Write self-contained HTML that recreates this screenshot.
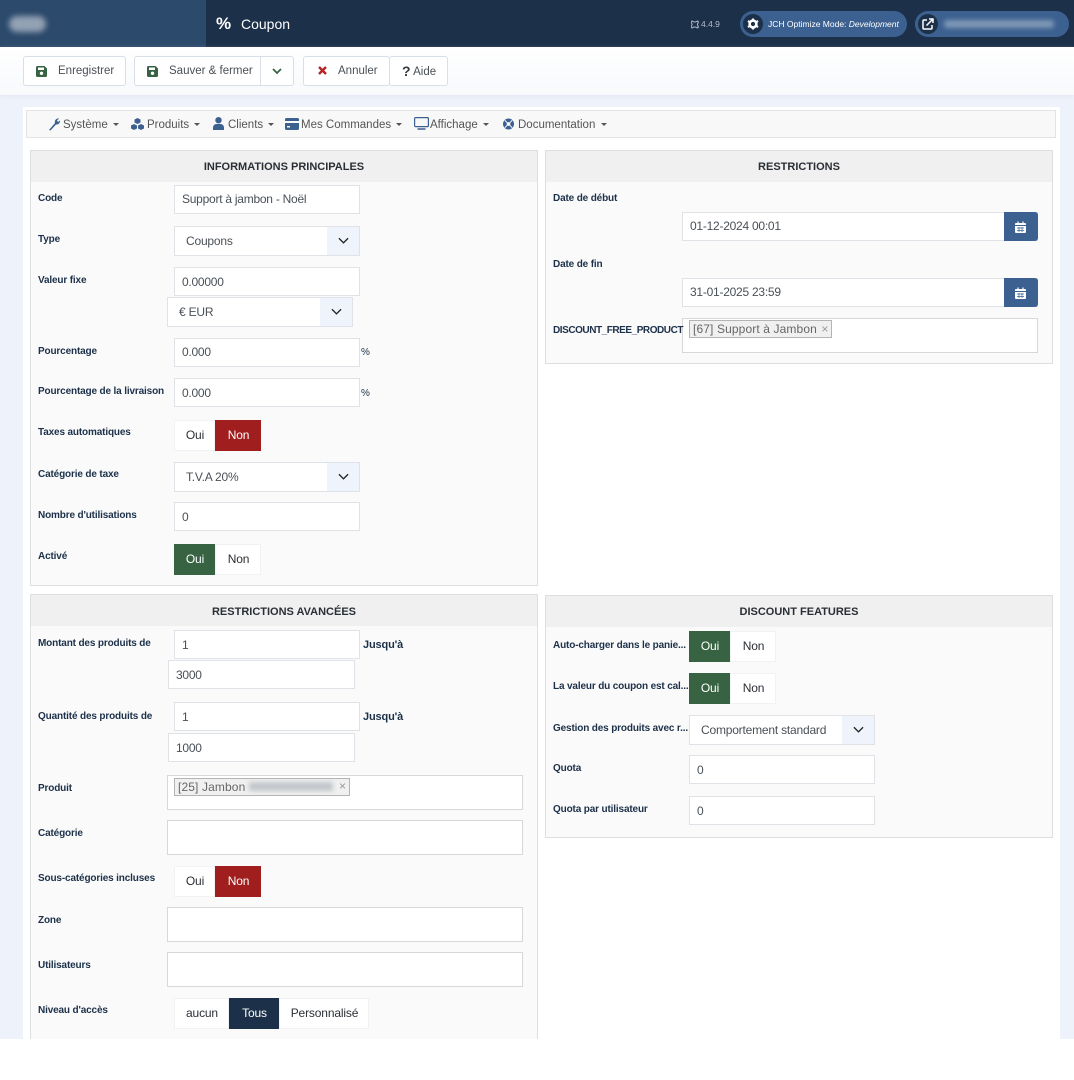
<!DOCTYPE html>
<html lang="fr"><head><meta charset="utf-8"><title>Coupon</title>
<style>
*{box-sizing:border-box}
html,body{margin:0;padding:0;background:#fff}
body{width:1074px;height:1080px;position:relative;overflow:hidden;font-family:"Liberation Sans",sans-serif;font-size:12px;color:#495057}
div,span.a,svg.a{position:absolute}
#clip{left:0;top:0;width:1074px;height:1039px;overflow:hidden;background:#eef2fa;filter:blur(.3px)}
.panel{background:#fafafa;border:1px solid #dcdfe1}
.ph{left:0;right:0;top:0;height:31px;background:#f0f0f0;text-align:center;font-weight:bold;font-size:11px;line-height:32px;color:#2a2f35}
.l{font-weight:bold;font-size:10px;line-height:14px;color:#1c3049;white-space:nowrap;margin-top:1px;letter-spacing:-.15px;z-index:2}
.i{background:#fff;border:1px solid #dfe3e7;height:29px;line-height:28px;padding-left:7px;font-size:12px;letter-spacing:-.25px;color:#495057;white-space:nowrap}
.s{background:#fff;border:1px solid #dfe3e7;height:30px;line-height:29px;font-size:12px;letter-spacing:-.2px;color:#495057;white-space:nowrap}
.s u{position:absolute;right:0;top:0;width:32px;height:28px;background:#eff3fb;text-decoration:none}
.s svg{position:absolute;left:11px;top:10px}
.t{height:31px;background:#fff;border:1px solid #f1f2f3;line-height:28px;text-align:center;font-size:12px;letter-spacing:-.15px;color:#2b3036;white-space:nowrap;padding-left:1px}
.g{background:#386342;color:#fff;border-color:#386342}
.r{background:#a01e1e;color:#fff;border-color:#a01e1e}
.d{background:#1c3049;color:#fff;border-color:#1c3049}
.box{background:#fff;border:1px solid #d6d8da}
.tag{background:#f0f0f0;border:1px solid #b4b4b4;height:18px;line-height:16px;color:#666;font-size:12px;letter-spacing:.12px;white-space:nowrap;padding-left:3px}
.b{top:56px;height:30px;background:#fff;border:1px solid #d9dfe6;border-radius:3px;line-height:29px;font-size:11.5px;color:#4a5056;white-space:nowrap}
.n{top:118px;line-height:14px;font-size:11.5px;color:#555;white-space:nowrap}
.c{display:inline-block;width:0;height:0;border-left:3px solid transparent;border-right:3px solid transparent;border-top:3px solid #555;vertical-align:2px;margin-left:2px}
.cal{left:321px;top:0;width:34px;height:29px;background:#3c6190;border-radius:0 3px 3px 0}
</style></head><body>
<div id="clip">
<div style="left:0;top:0;width:1074px;height:47px;background:#1c3049"></div>
<div style="left:0;top:0;width:206px;height:47px;background:#2c4a6b"></div>
<div style="left:9px;top:16px;width:37px;height:16px;background:#93a2b4;border-radius:8px;filter:blur(3px)"></div>
<div style="left:216px;top:14px;font-size:17px;line-height:20px;color:#fff;font-weight:bold">%</div>
<div style="left:241px;top:15px;font-size:14px;line-height:18px;color:#fff">Coupon</div>
<svg class="a" style="left:691px;top:20px" width="9" height="9" viewBox="0 0 9 9"><path d="M1 1l2 1 1.500 0 2-1 1 1-1 2v1l1 2-1 1-2-1h-1.500l-2 1-1-1 1-2v-1l-1-2z" fill="none" stroke="#a8b3c1" stroke-width="1.100"/></svg>
<div style="left:701px;top:17px;font-size:8.500px;line-height:14px;color:#b4bdc9">4.4.9</div>
<div style="left:740px;top:11px;width:167px;height:26px;background:#3c6190;border-radius:13px"></div>
<div style="left:743px;top:14px;width:20px;height:20px;background:#1c3049;border-radius:50%"></div>
<svg class="a" style="left:747px;top:18px" width="12" height="12" viewBox="0 0 12 12"><circle cx="6" cy="6" r="3.400" fill="none" stroke="#fff" stroke-width="2.600"/><path d="M6 .5v2M6 9.500v2M.9 3l1.800 1M9.300 8l1.800 1M.9 9l1.800-1M9.300 4l1.800-1" stroke="#fff" stroke-width="2"/></svg>
<div style="left:768px;top:17px;font-size:8.500px;line-height:14px;color:#fff;white-space:nowrap">JCH Optimize Mode: <i>Development</i></div>
<div style="left:915px;top:11px;width:154px;height:26px;background:#3c6190;border-radius:13px"></div>
<div style="left:918px;top:14px;width:20px;height:20px;background:#1c3049;border-radius:50%"></div>
<svg class="a" style="left:922px;top:18px" width="12" height="12" viewBox="0 0 12 12"><path d="M5 2H2a1 1 0 0 0-1 1v7a1 1 0 0 0 1 1h7a1 1 0 0 0 1-1V7" fill="none" stroke="#fff" stroke-width="1.500"/><path d="M4.500 7.500L10.500 1.500M7 1h4v4" fill="none" stroke="#fff" stroke-width="1.500"/></svg>
<div style="left:944px;top:20px;width:110px;height:8px;background:#7f97b5;border-radius:3px;filter:blur(2.500px)"></div>

<div style="left:0;top:47px;width:1074px;height:48px;background:linear-gradient(#fff,#f7f9fc);box-shadow:0 1px 4px rgba(200,210,230,.35)"></div>
<div class="b" style="left:23px;width:103px;padding-left:34px">Enregistrer</div>
<svg class="a" style="left:36px;top:66px" width="11" height="11" viewBox="0 0 11 11"><path d="M1.500 0h7L11 2.500v7A1.500 1.500 0 0 1 9.500 11h-8A1.500 1.500 0 0 1 0 9.500v-8A1.500 1.500 0 0 1 1.500 0z" fill="#386342"/><rect x="2" y="1.500" width="6" height="2.500" fill="#fff"/><circle cx="5.500" cy="7.300" r="1.700" fill="#fff"/></svg>
<div class="b" style="left:134px;width:160px;padding-left:34px">Sauver &amp; fermer</div>
<div style="left:260px;top:57px;width:1px;height:28px;background:#d9dfe6"></div>
<svg class="a" style="left:147px;top:66px" width="11" height="11" viewBox="0 0 11 11"><path d="M1.500 0h7L11 2.500v7A1.500 1.500 0 0 1 9.500 11h-8A1.500 1.500 0 0 1 0 9.500v-8A1.500 1.500 0 0 1 1.500 0z" fill="#386342"/><rect x="2" y="1.500" width="6" height="2.500" fill="#fff"/><circle cx="5.500" cy="7.300" r="1.700" fill="#fff"/></svg>
<svg class="a" style="left:272px;top:68px" width="10" height="7" viewBox="0 0 10 7"><path d="M1 1l4 4 4-4" fill="none" stroke="#386342" stroke-width="1.800"/></svg>
<div class="b" style="left:303px;width:87px;padding-left:34px">Annuler</div>
<svg class="a" style="left:318px;top:66px" width="9" height="9" viewBox="0 0 9 9"><path d="M1 1l7 7M8 1L1 8" stroke="#b62424" stroke-width="2.400"/></svg>
<div class="b" style="left:389px;width:59px;padding-left:12px;line-height:28px"><b style="font-size:14px;color:#33393f;vertical-align:-1px">?</b> Aide</div>

<div style="left:23px;top:107px;width:1037px;height:940px;background:#fff"></div>
<div style="left:26px;top:110px;width:1030px;height:28px;background:#f8f8f8;border:1px solid #e3e3e3"></div>
<svg class="a" style="left:48px;top:117px" width="13" height="14" viewBox="0 0 13 14"><path d="M1 13l6-7a3.500 3.500 0 0 1 4-4.500L9 3.500l1 1.500 2-1.500A3.500 3.500 0 0 1 8 7.500L2.500 13.500z" fill="#3c6190"/></svg>
<div class="n" style="left:63px">Système <i class="c"></i></div>
<svg class="a" style="left:131px;top:118px" width="13" height="12" viewBox="0 0 13 12"><path d="M6.500 0l3 1.500v3l-3 1.500-3-1.500v-3zM3 6l3 1.500v3L3 12 0 10.500v-3zM10 6l3 1.500v3L10 12l-3-1.500v-3z" fill="#3c6190"/></svg>
<div class="n" style="left:147px">Produits <i class="c"></i></div>
<svg class="a" style="left:213px;top:117px" width="11" height="13" viewBox="0 0 11 13"><circle cx="5.500" cy="3.200" r="3.200" fill="#3c6190"/><path d="M0 13v-2.500A3.500 3.500 0 0 1 3.500 7h4A3.500 3.500 0 0 1 11 10.500V13z" fill="#3c6190"/></svg>
<div class="n" style="left:228px">Clients <i class="c"></i></div>
<svg class="a" style="left:285px;top:118px" width="14" height="12" viewBox="0 0 14 12"><path d="M0 1.500A1.500 1.500 0 0 1 1.500 0h11A1.500 1.500 0 0 1 14 1.500V3H0zM0 5h14v5.500a1.500 1.500 0 0 1-1.500 1.500h-11A1.500 1.500 0 0 1 0 10.500zM2 8v1.500h3V8z" fill="#3c6190"/></svg>
<div class="n" style="left:301px">Mes Commandes <i class="c"></i></div>
<svg class="a" style="left:414px;top:117px" width="15" height="13" viewBox="0 0 15 13"><rect x=".6" y=".6" width="13.800" height="9" rx="1" fill="none" stroke="#3c6190" stroke-width="1.200"/><path d="M3.500 12h8" stroke="#3c6190" stroke-width="1.500"/></svg>
<div class="n" style="left:430px">Affichage <i class="c"></i></div>
<svg class="a" style="left:503px;top:118px" width="11" height="12" viewBox="0 0 12 12"><circle cx="6" cy="6" r="4" fill="none" stroke="#3c6190" stroke-width="4"/><path d="M2 2l2.500 2.500M10 2L7.500 4.500M2 10l2.500-2.500M10 10L7.500 7.500" stroke="#fff" stroke-width="1"/></svg>
<div class="n" style="left:518px">Documentation <i class="c"></i></div>

<!-- panel 1 -->
<div class="panel" style="left:30px;top:150px;width:508px;height:436px"><div class="ph">INFORMATIONS PRINCIPALES</div></div>
<div class="l" style="left:38px;top:191px">Code</div>
<div class="i" style="left:174px;top:185px;width:186px;line-height:26px">Support à jambon - Noël</div>
<div class="l" style="left:38px;top:232px">Type</div>
<div class="s" style="left:174px;top:226px;width:186px;padding-left:11px">Coupons<u><svg width="11" height="8" viewBox="0 0 12 8"><path d="M1 1l5 5 5-5" fill="none" stroke="#222" stroke-width="1.400"/></svg></u></div>
<div class="l" style="left:38px;top:273px">Valeur fixe</div>
<div class="i" style="left:174px;top:267px;width:186px">0.00000</div>
<div class="s" style="left:167px;top:297px;width:186px;padding-left:11px">€ EUR<u><svg width="11" height="8" viewBox="0 0 12 8"><path d="M1 1l5 5 5-5" fill="none" stroke="#222" stroke-width="1.400"/></svg></u></div>
<div class="l" style="left:38px;top:344px">Pourcentage</div>
<div class="i" style="left:174px;top:338px;width:186px;line-height:26px">0.000</div>
<div class="l" style="left:361px;top:345px;font-weight:normal">%</div>
<div class="l" style="left:38px;top:384px">Pourcentage de la livraison</div>
<div class="i" style="left:174px;top:378px;width:186px">0.000</div>
<div class="l" style="left:361px;top:386px;font-weight:normal">%</div>
<div class="l" style="left:38px;top:425px">Taxes automatiques</div>
<div class="t" style="left:174px;top:420px;width:41px">Oui</div>
<div class="t r" style="left:215px;top:420px;width:46px">Non</div>
<div class="l" style="left:38px;top:467px">Catégorie de taxe</div>
<div class="s" style="left:174px;top:462px;width:186px;padding-left:11px">T.V.A 20%<u><svg width="11" height="8" viewBox="0 0 12 8"><path d="M1 1l5 5 5-5" fill="none" stroke="#222" stroke-width="1.400"/></svg></u></div>
<div class="l" style="left:38px;top:508px">Nombre d'utilisations</div>
<div class="i" style="left:174px;top:502px;width:186px">0</div>
<div class="l" style="left:38px;top:549px">Activé</div>
<div class="t g" style="left:174px;top:544px;width:41px">Oui</div>
<div class="t" style="left:215px;top:544px;width:46px">Non</div>

<!-- panel 2 -->
<div class="panel" style="left:545px;top:150px;width:508px;height:214px"><div class="ph">RESTRICTIONS</div></div>
<div class="l" style="left:553px;top:191px">Date de début</div>
<div class="i" style="left:682px;top:212px;width:356px;height:29px;line-height:26px">01-12-2024 00:01<div class="cal" style="top:-1px"></div></div>
<svg class="a" style="left:1015px;top:221px" width="11" height="12" viewBox="0 0 11 12"><path d="M0 3a1 1 0 0 1 1-1h9a1 1 0 0 1 1 1v1H0zM0 5h11v6a1 1 0 0 1-1 1H1a1 1 0 0 1-1-1z" fill="#fff"/><path d="M3 .5v2M8 .5v2" stroke="#fff" stroke-width="1.200"/><path d="M2 7h7M2 9.500h7M4 6v5M7 6v5" stroke="#3c6190" stroke-width=".7"/></svg>
<div class="l" style="left:553px;top:257px">Date de fin</div>
<div class="i" style="left:682px;top:278px;width:356px;height:29px;line-height:26px">31-01-2025 23:59<div class="cal" style="top:-1px"></div></div>
<svg class="a" style="left:1015px;top:287px" width="11" height="12" viewBox="0 0 11 12"><path d="M0 3a1 1 0 0 1 1-1h9a1 1 0 0 1 1 1v1H0zM0 5h11v6a1 1 0 0 1-1 1H1a1 1 0 0 1-1-1z" fill="#fff"/><path d="M3 .5v2M8 .5v2" stroke="#fff" stroke-width="1.200"/><path d="M2 7h7M2 9.500h7M4 6v5M7 6v5" stroke="#3c6190" stroke-width=".7"/></svg>
<div class="l" style="left:553px;top:323px;letter-spacing:-.45px">DISCOUNT_FREE_PRODUCT</div>
<div class="box" style="left:682px;top:318px;width:356px;height:35px"></div>
<div class="tag" style="left:689px;top:320px;width:143px">[67] Support à Jambon <span style="color:#999;margin-left:1px">×</span></div>

<!-- panel 3 -->
<div class="panel" style="left:30px;top:594px;width:508px;height:470px"><div class="ph" style="line-height:34px">RESTRICTIONS AVANCÉES</div></div>
<div class="l" style="left:38px;top:636px">Montant des produits de</div>
<div class="i" style="left:174px;top:630px;width:186px">1</div>
<div class="l" style="left:363px;top:638px;font-size:11px;margin-top:0">Jusqu'à</div>
<div class="i" style="left:168px;top:660px;width:187px">3000</div>
<div class="l" style="left:38px;top:709px">Quantité des produits de</div>
<div class="i" style="left:174px;top:702px;width:186px">1</div>
<div class="l" style="left:363px;top:710px;font-size:11px;margin-top:0">Jusqu'à</div>
<div class="i" style="left:168px;top:733px;width:187px">1000</div>
<div class="l" style="left:38px;top:781px">Produit</div>
<div class="box" style="left:167px;top:775px;width:356px;height:35px"></div>
<div class="tag" style="left:174px;top:778px;width:176px">[25] Jambon</div>
<div style="left:249px;top:782px;width:84px;height:9px;background:#c2c6cb;filter:blur(2.500px)"></div>
<div style="left:339px;top:779px;font-size:12px;line-height:15px;color:#999">×</div>
<div class="l" style="left:38px;top:826px">Catégorie</div>
<div class="box" style="left:167px;top:820px;width:356px;height:35px"></div>
<div class="l" style="left:38px;top:871px">Sous-catégories incluses</div>
<div class="t" style="left:174px;top:866px;width:41px">Oui</div>
<div class="t r" style="left:215px;top:866px;width:46px">Non</div>
<div class="l" style="left:38px;top:913px">Zone</div>
<div class="box" style="left:167px;top:907px;width:356px;height:35px"></div>
<div class="l" style="left:38px;top:958px">Utilisateurs</div>
<div class="box" style="left:167px;top:952px;width:356px;height:35px"></div>
<div class="l" style="left:38px;top:1003px">Niveau d'accès</div>
<div class="t" style="left:174px;top:998px;width:55px">aucun</div>
<div class="t d" style="left:229px;top:998px;width:50px">Tous</div>
<div class="t" style="left:279px;top:998px;width:90px">Personnalisé</div>

<!-- panel 4 -->
<div class="panel" style="left:545px;top:595px;width:508px;height:243px"><div class="ph">DISCOUNT FEATURES</div></div>
<div class="l" style="left:553px;top:638px">Auto-charger dans le panie...</div>
<div class="t g" style="left:689px;top:631px;width:41px">Oui</div>
<div class="t" style="left:730px;top:631px;width:46px">Non</div>
<div class="l" style="left:553px;top:679px">La valeur du coupon est cal...</div>
<div class="t g" style="left:689px;top:673px;width:41px">Oui</div>
<div class="t" style="left:730px;top:673px;width:46px">Non</div>
<div class="l" style="left:553px;top:721px">Gestion des produits avec r...</div>
<div class="s" style="left:689px;top:715px;width:186px;padding-left:11px">Comportement standard<u><svg width="11" height="8" viewBox="0 0 12 8"><path d="M1 1l5 5 5-5" fill="none" stroke="#222" stroke-width="1.400"/></svg></u></div>
<div class="l" style="left:553px;top:761px">Quota</div>
<div class="i" style="left:689px;top:755px;width:186px">0</div>
<div class="l" style="left:553px;top:802px">Quota par utilisateur</div>
<div class="i" style="left:689px;top:796px;width:186px">0</div>
</div>
</body></html>
